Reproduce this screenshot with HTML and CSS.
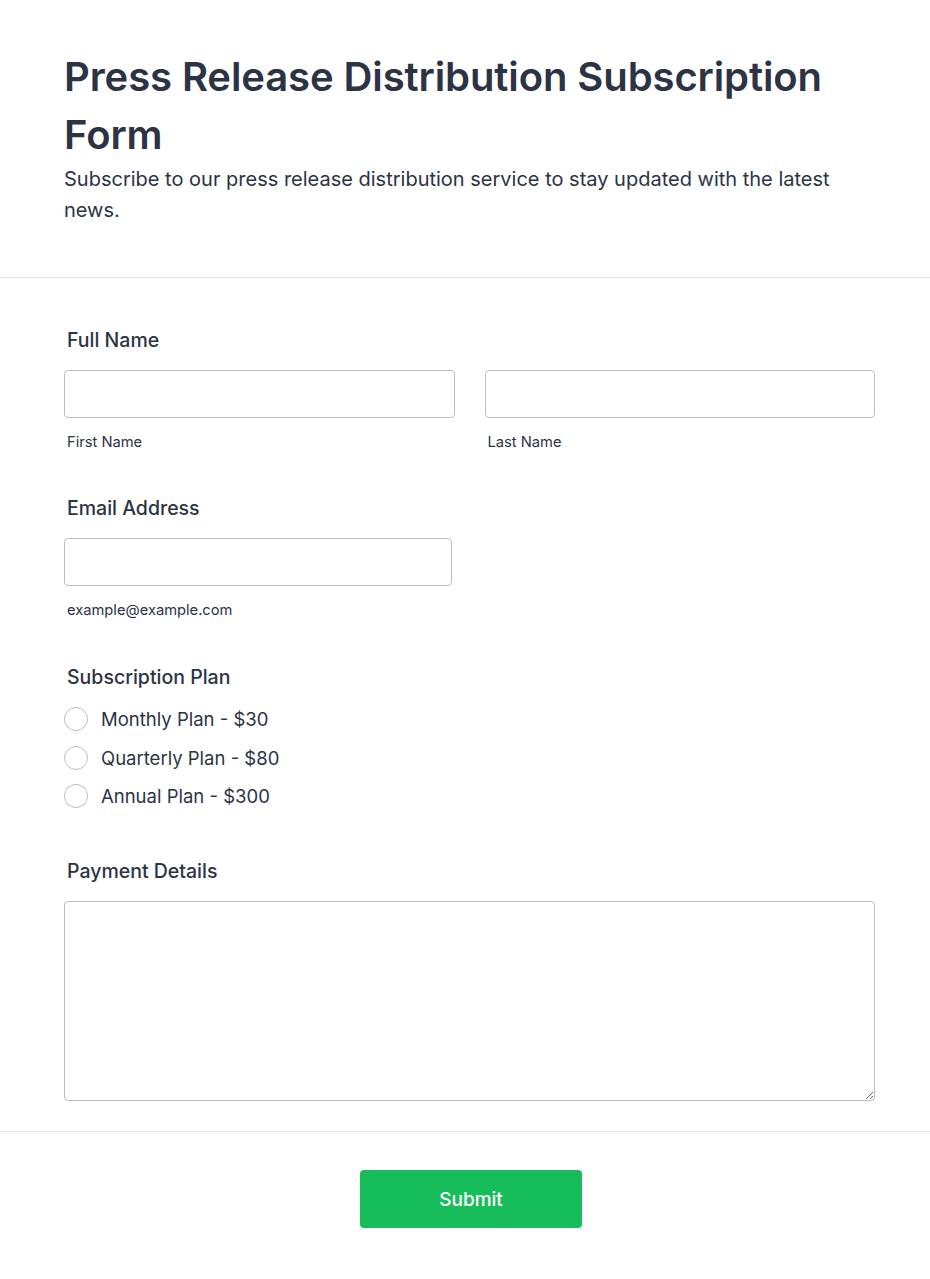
FILE: index.html
```html
<!DOCTYPE html>
<html lang="en">
<head>
<meta charset="utf-8">
<title>Press Release Distribution Subscription Form</title>
<link rel="stylesheet" href="styles.css">
</head>
<body>
<div class="page">
  <header class="header">
    <h1 class="title">Press Release Distribution Subscription Form</h1>
    <p class="subtitle">Subscribe to our press release distribution service to stay updated with the latest news.</p>
  </header>
  <form class="form">
    <div class="field field-name">
      <div class="label">Full Name</div>
      <div class="name-row">
        <div class="name-col">
          <input class="input" type="text">
          <div class="sublabel">First Name</div>
        </div>
        <div class="name-col">
          <input class="input" type="text">
          <div class="sublabel">Last Name</div>
        </div>
      </div>
    </div>
    <div class="field field-email">
      <div class="label">Email Address</div>
      <input class="input input-email" type="email">
      <div class="sublabel">example@example.com</div>
    </div>
    <div class="field field-plan">
      <div class="label label-plan">Subscription Plan</div>
      <div class="radios">
        <label class="radio-row"><span class="radio"></span><span class="radio-text">Monthly Plan - $30</span></label>
        <label class="radio-row"><span class="radio"></span><span class="radio-text">Quarterly Plan - $80</span></label>
        <label class="radio-row"><span class="radio"></span><span class="radio-text">Annual Plan - $300</span></label>
      </div>
    </div>
    <div class="field field-payment">
      <div class="label">Payment Details</div>
      <textarea class="textarea"></textarea>
    </div>
  </form>
  <div class="footer">
    <button class="submit" type="button">Submit</button>
  </div>
</div>
</body>
</html>
```
FILE: styles.css
```css
* { box-sizing: border-box; }
html, body { margin: 0; padding: 0; background: #fff; }
body {
  font-family: Inter, "Noto Sans", "Liberation Sans", sans-serif;
  color: #2c3345;
}
.page { width: 930px; }
.header {
  padding: 48px 55px 51px 64px;
  border-bottom: 1px solid #e3e5ec;
}
.title {
  margin: 0;
  font-size: 40px;
  line-height: 58px;
  font-weight: 600;
  letter-spacing: -0.1px;
}
.subtitle {
  margin: 0;
  font-size: 20px;
  line-height: 31px;
  font-weight: 400;
}
.form {
  padding: 48px 55px 30px 64px;
  border-bottom: 1px solid #e3e5ec;
  display: flex;
  flex-direction: column;
}
.field-name { margin-bottom: 42px; }
.field-email { margin-bottom: 43px; }
.field-plan { margin-bottom: 45px; }
.label {
  font-size: 19.5px;
  line-height: 28px;
  font-weight: 500;
  padding-left: 3px;
  margin-bottom: 16px;
}
.label-plan { margin-bottom: 12px; }
.name-row {
  display: flex;
  gap: 30px;
}
.name-col { flex: 1; display: flex; flex-direction: column; }
.input {
  display: block;
  width: 100%;
  height: 48px;
  border: 1px solid #b8bdc9;
  border-radius: 4px;
  background: #fff;
  font: inherit;
  outline: none;
}
.input-email { width: 388px; }
.sublabel {
  font-size: 14.7px;
  line-height: 20px;
  margin-top: 14px;
  padding-left: 3px;
  color: #2c3345;
}
.radios { display: flex; flex-direction: column; gap: 6.5px; }
.radio-row {
  display: flex;
  align-items: center;
  height: 32px;
  gap: 13px;
}
.radio {
  width: 24px;
  height: 24px;
  border: 1px solid #b8bdc9;
  border-radius: 50%;
  background: #fff;
  flex: none;
}
.radio-text {
  font-size: 18.5px;
  line-height: 24px;
}
.textarea {
  display: block;
  width: 100%;
  height: 200px;
  border: 1px solid #b8bdc9;
  border-radius: 4px;
  font: inherit;
  outline: none;
  resize: vertical;
}
.footer {
  padding-top: 38px;
  display: flex;
  justify-content: center;
  padding-left: 12px;
}
.submit {
  width: 222px;
  height: 58px;
  border: none;
  border-radius: 4px;
  background: #18bd5b;
  color: #fff;
  font-family: Inter, "Noto Sans", "Liberation Sans", sans-serif;
  font-size: 19px;
  font-weight: 500;
}
```
